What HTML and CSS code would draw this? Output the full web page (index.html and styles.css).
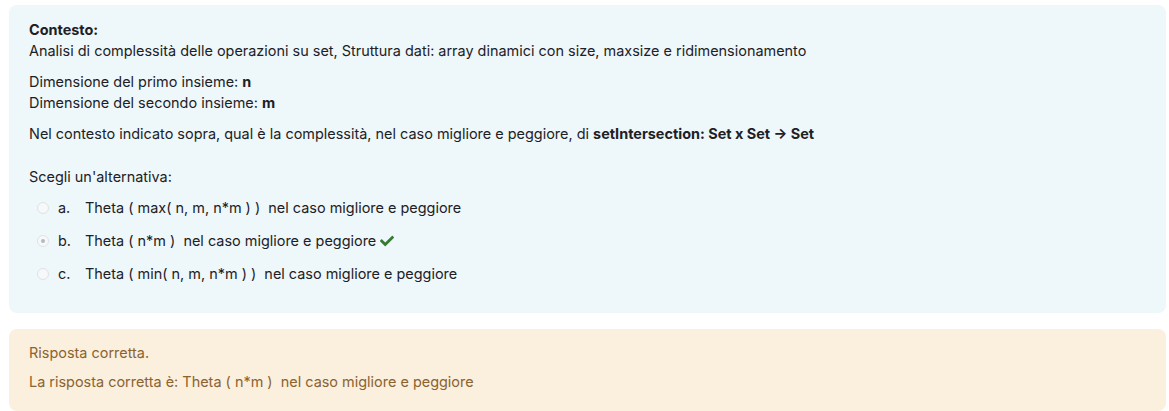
FILE: index.html
```html
<!DOCTYPE html>
<html lang="it">
<head>
<meta charset="utf-8">
<title>Domanda</title>
<link rel="stylesheet" href="styles.css">
</head>
<body>
<div class="que">
  <div class="formulation">
    <div class="qtext">
      <p><strong>Contesto:</strong><br>Analisi di complessità delle operazioni su set, Struttura dati: array dinamici con size, maxsize e ridimensionamento</p>
      <p>Dimensione del primo insieme: <strong>n</strong><br>Dimensione del secondo insieme: <strong>m</strong></p>
      <p>Nel contesto indicato sopra, qual è la complessità, nel caso migliore e peggiore, di <strong>setIntersection: Set x Set → Set</strong></p>
    </div>
    <div class="ablock">
      <div class="prompt">Scegli un'alternativa:</div>
      <div class="answer">
        <div class="opt">
          <span class="radio"></span>
          <span class="num">a.</span>
          <span class="lbl">Theta ( max( n, m, n*m ) )&nbsp; nel caso migliore e peggiore</span>
        </div>
        <div class="opt">
          <span class="radio checked"></span>
          <span class="num">b.</span>
          <span class="lbl">Theta ( n*m )&nbsp; nel caso migliore e peggiore</span>
          <svg class="check" viewBox="0 0 512 512" width="14" height="14"><path d="M173.9 439.4l-166.4-166.4c-10-10-10-26.2 0-36.2l36.2-36.2c10-10 26.2-10 36.2 0L192 312.7 432.1 72.6c10-10 26.2-10 36.2 0l36.2 36.2c10 10 10 26.2 0 36.2l-294.4 294.4c-10 10-26.2 10-36.2 0z" fill="#357a32"/></svg>
        </div>
        <div class="opt">
          <span class="radio"></span>
          <span class="num">c.</span>
          <span class="lbl">Theta ( min( n, m, n*m ) )&nbsp; nel caso migliore e peggiore</span>
        </div>
      </div>
    </div>
  </div>
  <div class="outcome">
    <div class="feedback">Risposta corretta.</div>
    <div class="rightanswer">La risposta corretta è: Theta ( n*m )&nbsp; nel caso migliore e peggiore</div>
  </div>
</div>
</body>
</html>
```

FILE: styles.css
```css
html, body {
  margin: 0;
  padding: 0;
  background: #ffffff;
}
body {
  font-family: Inter, "Noto Sans", "Liberation Sans", sans-serif;
  font-size: 14.45px;
  line-height: 21px;
  color: #1d2125;
}
.que {
  padding: 5px 3px 0 9px;
}
.formulation {
  background: #eef7fa;
  border-radius: 8px;
  padding: 14px 20px 23px 20px;
}
.qtext p {
  margin: 0 0 10px 0;
}
.qtext strong {
  font-weight: 700;
}
.ablock {
  margin-top: 22px;
}
.prompt {
  margin-bottom: 4px;
}
.answer {
  padding-left: 8px;
}
.opt {
  display: flex;
  align-items: center;
  height: 33px;
}
.radio {
  width: 12px;
  height: 12px;
  border: 1px solid #e0e3e6;
  border-radius: 50%;
  background: #f6f8f9;
  box-sizing: border-box;
  display: flex;
  align-items: center;
  justify-content: center;
  margin-right: 9px;
}
.radio.checked::after {
  content: "";
  width: 4px;
  height: 4px;
  border-radius: 50%;
  background: #b5b9bd;
}
.num {
  width: 27px;
}
.check {
  margin-left: 4px;
}
.outcome {
  margin-top: 16px;
  background: #fbefdd;
  color: #8a6330;
  border-radius: 8px;
  padding: 13px 20px 19px 20px;
}
.feedback {
  margin-bottom: 8px;
}
```
